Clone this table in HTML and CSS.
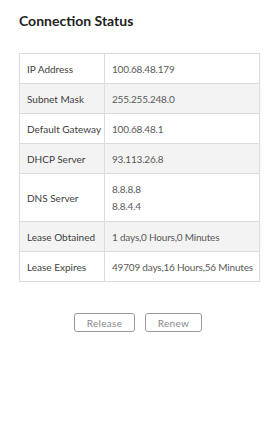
FILE: index.html
```html
<!DOCTYPE html>
<html>
<head>
<meta charset="utf-8">
<link rel="stylesheet" href="styles.css">
</head>
<body>
<div class="page">
  <h1 class="title">Connection Status</h1>
  <table class="status">
    <colgroup><col class="col-label"><col class="col-value"></colgroup>
    <tr><td class="label">IP Address</td><td class="value">100.68.48.179</td></tr>
    <tr class="alt"><td class="label">Subnet Mask</td><td class="value">255.255.248.0</td></tr>
    <tr><td class="label">Default Gateway</td><td class="value">100.68.48.1</td></tr>
    <tr class="alt"><td class="label">DHCP Server</td><td class="value">93.113.26.8</td></tr>
    <tr class="tall"><td class="label">DNS Server</td><td class="value"><div class="line">8.8.8.8</div><div class="line">8.8.4.4</div></td></tr>
    <tr class="alt"><td class="label">Lease Obtained</td><td class="value">1 days,0 Hours,0 Minutes</td></tr>
    <tr><td class="label">Lease Expires</td><td class="value">49709 days,16 Hours,56 Minutes</td></tr>
  </table>
  <div class="actions">
    <button class="btn btn-release">Release</button>
    <button class="btn btn-renew">Renew</button>
  </div>
</div>
</body>
</html>
```

FILE: styles.css
```css
html, body {
  margin: 0;
  padding: 0;
  background: #ffffff;
}
body {
  font-family: Lato, "Open Sans", sans-serif;
  color: #444;
}
.page {
  padding: 11px 9px 0 19px;
}
.title {
  margin: 0;
  font-size: 14px;
  font-weight: 700;
  color: #222;
  line-height: 20px;
}
.status {
  margin-top: 22px;
  width: 240px;
  table-layout: fixed;
  border-collapse: collapse;
  font-size: 10px;
  box-shadow: 0 0 2px rgba(0,0,0,0.06);
}
.col-label { width: 85px; }
.col-value { width: 155px; }
.status td {
  border: 1px solid #dcdcdc;
  height: 30px;
  padding: 0 0 0 7px;
  box-sizing: border-box;
  vertical-align: middle;
  white-space: nowrap;
  overflow: hidden;
}
.status .label {
  color: #3e3e3e;
}
.status .value {
  color: #5a5a5a;
  letter-spacing: -0.2px;
}
.status tr.alt td {
  background: #f3f3f3;
}
.status tr.tall td {
  height: 48px;
}
.status .line {
  line-height: 17px;
}
.actions {
  display: flex;
  justify-content: center;
  gap: 10px;
  margin-top: 31px;
  padding-right: 2px;
}
.btn {
  font-family: Lato, "Open Sans", sans-serif;
  font-size: 10px;
  font-weight: 400;
  color: #888;
  background: #fff;
  border: 1px solid #9a9a9a;
  border-radius: 3px;
  height: 19px;
  padding: 0;
  letter-spacing: 0.3px;
}
.btn-release { width: 61px; }
.btn-renew { width: 57px; }
```
